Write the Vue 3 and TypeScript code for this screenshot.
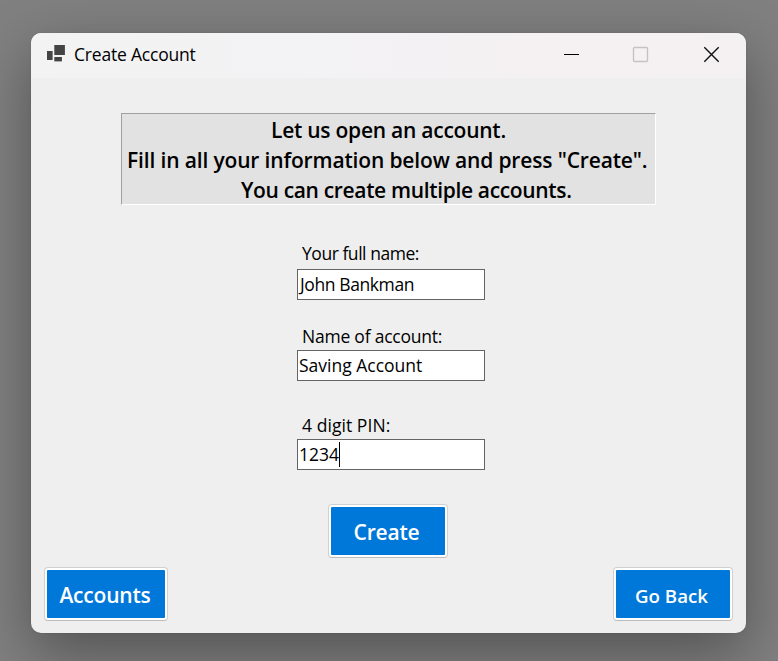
<script setup lang="ts">
import { reactive } from 'vue'

interface Field {
  id: string
  label: string
  value: string
  active?: boolean
}

const fields = reactive<Field[]>([
  { id: 'name', label: 'Your full name:', value: 'John Bankman' },
  { id: 'account', label: 'Name of account:', value: 'Saving Account' },
  { id: 'pin', label: '4 digit PIN:', value: '1234', active: true },
])
</script>

<template>
  <div class="desktop">
    <main class="window">
      <header class="titlebar">
        <svg class="app-icon" width="20" height="20" viewBox="0 0 20 20">
          <rect x="8.3" y="1" width="10.6" height="10" fill="#444" />
          <rect x="1" y="7" width="5.6" height="9" fill="#444" />
          <rect x="8.3" y="13" width="7.6" height="4.4" fill="#444" />
        </svg>
        <h1 class="title"><span>Create Account</span></h1>
        <svg class="controls" width="150" height="20" viewBox="0 0 150 20" fill="none">
          <path d="M0 10.5H15" stroke="#000" />
          <rect x="69.5" y="3.5" width="14" height="14" rx="1" stroke="#c5c2c4" stroke-width="1.4" />
          <path d="M140.3 3.3L154.7 17.7M154.7 3.3L140.3 17.7" stroke="#111" stroke-width="1.4" />
        </svg>
      </header>
      <section class="banner">
        <p class="line first">Let us open an account.</p>
        <p class="line second">Fill in all your information below and press "Create".</p>
        <p class="line third">You can create multiple accounts.</p>
      </section>
      <form class="form" @submit.prevent>
        <div v-for="f in fields" :key="f.id" class="field" :class="f.id">
          <label class="label"><span>{{ f.label }}</span></label>
          <div class="input"><span>{{ f.value }}</span><i v-if="f.active" class="caret"></i></div>
        </div>
        <button class="btn create" type="button"><span>Create</span></button>
      </form>
      <footer class="footer">
        <button class="btn accounts" type="button"><span>Accounts</span></button>
        <button class="btn back" type="button"><span>Go Back</span></button>
      </footer>
    </main>
  </div>
</template>

<style>
body {
  background: #808080;
  overflow: hidden;
}
</style>

<style scoped>
* {
  box-sizing: border-box;
}
.desktop {
  width: 778px;
  height: 661px;
  padding: 33px 32px 28px 31px;
  background: #808080;
  overflow: hidden;
  font-family: 'Open Sans', 'Noto Sans', sans-serif;
  color: #000;
}
.window {
  width: 715px;
  height: 600px;
  display: flex;
  flex-direction: column;
  background: #efefef;
  border-radius: 10px;
  overflow: hidden;
  box-shadow: 0 0 2px rgba(0, 0, 0, 0.12), 0 20px 60px rgba(0, 0, 0, 0.36);
}
.titlebar {
  height: 45px;
  flex: none;
  display: flex;
  align-items: flex-start;
  padding: 11px 27px 0 15px;
  background: linear-gradient(90deg, #f3f3f3 0%, #f3f2f4 40%, #f5f1f3 75%, #f4f1f3 100%);
}
.app-icon {
  flex: none;
}
.title {
  margin: -1px 0 0 8px;
  font-size: 17.5px;
  font-weight: 400;
  line-height: 22px;
  letter-spacing: -0.2px;
  white-space: nowrap;
}
.controls {
  flex: none;
  margin-left: auto;
  margin-right: 5px;
  overflow: visible;
}
.banner {
  width: 535px;
  height: 92px;
  margin: 35px 0 0 90px;
  flex: none;
  background: #e2e2e2;
  border: 1px solid #fff;
  border-top-color: #a0a0a0;
  border-left-color: #a0a0a0;
  padding-top: 1px;
}
.line {
  margin: 0;
  height: 30px;
  line-height: 30px;
  font-size: 21px;
  font-weight: 550;
  white-space: nowrap;
}
.first {
  padding-left: 149px;
  letter-spacing: -0.25px;
}
.second {
  padding-left: 5px;
  letter-spacing: -0.15px;
}
.third {
  padding-left: 119px;
  letter-spacing: -0.34px;
}
.form {
  display: flex;
  flex-direction: column;
  width: 188px;
  margin: 38px 0 0 266px;
}
.field {
  font-size: 17.5px;
  letter-spacing: -0.2px;
}
.label {
  display: block;
  height: 26px;
  padding-left: 5px;
  line-height: 20px;
  white-space: nowrap;
}
.name .label {
  letter-spacing: -0.46px;
}
.name .input {
  padding-left: 2px;
  letter-spacing: -0.4px;
}
.account {
  margin-top: 24px;
}
.account .label {
  line-height: 24px;
  letter-spacing: -0.22px;
}
.account .input {
  letter-spacing: 0;
}
.pin {
  margin-top: 32px;
}
.pin .label {
  line-height: 24px;
  letter-spacing: 0.06px;
}
.pin .input {
  letter-spacing: 0;
}
.input {
  height: 31px;
  display: flex;
  align-items: center;
  padding-left: 1px;
  border: 1px solid #646464;
  background: #fff;
  line-height: 29px;
  white-space: nowrap;
}
.caret {
  width: 1px;
  height: 25px;
  background: #000;
}
.btn {
  height: 54px;
  padding: 2px;
  border: 1px solid #d0d0d0;
  border-bottom-color: #bcbcbc;
  border-radius: 4px;
  background: linear-gradient(#0078d9, #0078d9) content-box, #fff;
  color: #fff;
  font-family: inherit;
  font-weight: 550;
  font-size: 21px;
  line-height: 48px;
  white-space: nowrap;
}
.btn span {
  display: block;
  height: 48px;
  line-height: 50px;
}
.create {
  width: 120px;
  margin: 34px 0 0 31px;
  letter-spacing: -0.2px;
}
.create span {
  margin-left: -3px;
}
.footer {
  display: flex;
  justify-content: space-between;
  padding: 9px 13px 0;
}
.accounts {
  width: 124px;
  letter-spacing: -0.2px;
}
.accounts span {
  margin-left: -2px;
}
.back {
  width: 120px;
  font-size: 18.7px;
}
.back span {
  margin-left: -3px;
  line-height: 51px;
}
</style>
